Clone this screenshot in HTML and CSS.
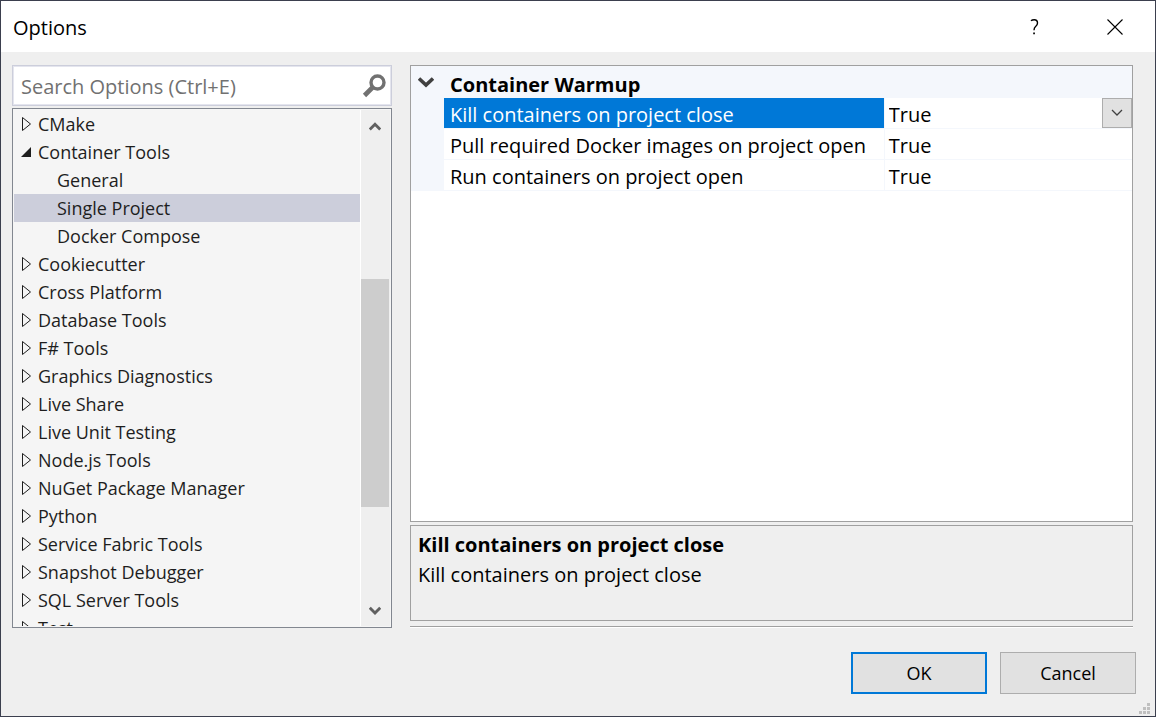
FILE: index.html
```
<!DOCTYPE html>
<html lang="en">
<head>
<meta charset="utf-8">
<title>Options</title>
<link rel="stylesheet" href="styles.css">
</head>
<body>
<svg class="defs" aria-hidden="true">
  <symbol id="closed" viewBox="0 0 11 16"><path d="M1.500 1.500v13L9.500 8z" fill="none" stroke="#1e1e1e"/></symbol>
  <symbol id="open" viewBox="0 0 11 16"><path d="M10 3v10H0z" fill="#1e1e1e"/></symbol>
</svg>
<div class="dialog" role="dialog" aria-labelledby="title">
  <header class="titlebar">
    <h1 class="title" id="title">Options</h1>
    <button class="caption" type="button" aria-label="Help">
      <svg width="16" height="16" viewBox="0 0 16 16"><path d="M4 1.800Q5.200 .700 7.300 .700Q10.500 .700 10.500 4Q10.500 5.800 8.800 7.300Q7 8.800 7 11.200" fill="none" stroke="#000" stroke-width="1.400"/><path d="M6.200 13.500h1.700v1.700H6.200z"/></svg>
    </button>
    <button class="caption" type="button" aria-label="Close">
      <svg width="16" height="16" viewBox="0 0 16 16"><path d="M.5.5l15 15M15.500.5l-15 15" fill="none" stroke="#000" stroke-width="1.100"/></svg>
    </button>
  </header>
  <main class="content">
    <section class="nav">
      <div class="search">
        <input class="search-input" type="text" aria-label="Search Options" placeholder="Search Options (Ctrl+E)">
        <button class="search-button" type="button" aria-label="Search">
          <svg width="24" height="24" viewBox="0 0 24 24" fill="none" stroke="#717171"><circle cx="15.500" cy="8.500" r="6.500" stroke-width="3.400"/><path d="M11 13L2.500 21.500" stroke-width="4.600"/></svg>
        </button>
      </div>
      <div class="tree">
        <ul class="items">
          <li><button class="item" type="button"><svg class="arrow"><use href="#closed"/></svg>CMake</button></li>
          <li><button class="item" type="button" aria-expanded="true"><svg class="arrow"><use href="#open"/></svg>Container Tools</button>
            <ul class="children">
              <li><button class="item child" type="button">General</button></li>
              <li><button class="item child selected" type="button" aria-current="true">Single Project</button></li>
              <li><button class="item child" type="button">Docker Compose</button></li>
            </ul>
          </li>
          <li><button class="item" type="button"><svg class="arrow"><use href="#closed"/></svg>Cookiecutter</button></li>
          <li><button class="item" type="button"><svg class="arrow"><use href="#closed"/></svg>Cross Platform</button></li>
          <li><button class="item" type="button"><svg class="arrow"><use href="#closed"/></svg>Database Tools</button></li>
          <li><button class="item" type="button"><svg class="arrow"><use href="#closed"/></svg>F# Tools</button></li>
          <li><button class="item" type="button"><svg class="arrow"><use href="#closed"/></svg>Graphics Diagnostics</button></li>
          <li><button class="item" type="button"><svg class="arrow"><use href="#closed"/></svg>Live Share</button></li>
          <li><button class="item" type="button"><svg class="arrow"><use href="#closed"/></svg>Live Unit Testing</button></li>
          <li><button class="item" type="button"><svg class="arrow"><use href="#closed"/></svg>Node.js Tools</button></li>
          <li><button class="item" type="button"><svg class="arrow"><use href="#closed"/></svg>NuGet Package Manager</button></li>
          <li><button class="item" type="button"><svg class="arrow"><use href="#closed"/></svg>Python</button></li>
          <li><button class="item" type="button"><svg class="arrow"><use href="#closed"/></svg>Service Fabric Tools</button></li>
          <li><button class="item" type="button"><svg class="arrow"><use href="#closed"/></svg>Snapshot Debugger</button></li>
          <li><button class="item" type="button"><svg class="arrow"><use href="#closed"/></svg>SQL Server Tools</button></li>
          <li><button class="item" type="button"><svg class="arrow"><use href="#closed"/></svg>Test</button></li>
        </ul>
        <div class="scrollbar">
          <button class="scroll-button" type="button" aria-label="Scroll up"><svg width="12" height="10" viewBox="0 0 12 10"><path d="M.8 8.500L6 3.300l5.200 5.200" fill="none" stroke="#606060" stroke-width="2.800"/></svg></button>
          <div class="track"><div class="before"></div><div class="thumb"></div><div class="after"></div></div>
          <button class="scroll-button" type="button" aria-label="Scroll down"><svg width="12" height="10" viewBox="0 0 12 10"><path d="M.8 2.700L6 7.900l5.200-5.200" fill="none" stroke="#606060" stroke-width="2.800"/></svg></button>
        </div>
      </div>
    </section>
    <section class="settings">
      <div class="grid">
        <table class="properties">
          <colgroup><col class="gutter"><col class="name"><col></colgroup>
          <thead>
            <tr class="category">
              <td><button class="collapse" type="button" aria-label="Collapse Container Warmup"><svg width="16" height="11" viewBox="0 0 16 11"><path d="M1 1.500l7 6.500 7-6.500" fill="none" stroke="#404040" stroke-width="3.600"/></svg></button></td>
              <th colspan="2" scope="colgroup">Container Warmup</th>
            </tr>
          </thead>
          <tbody>
            <tr><td class="margin"></td><th class="active" scope="row"><label for="kill">Kill containers on project close</label></th>
              <td class="value"><div class="picker"><select id="kill"><option>True</option><option>False</option></select><span class="drop"><svg width="12" height="8" viewBox="0 0 12 8"><path d="M1 1l5 5 5-5" fill="none" stroke="#404040" stroke-width="1.300"/></svg></span></div></td></tr>
            <tr><td class="margin"></td><th scope="row">Pull required Docker images on project open</th><td class="value">True</td></tr>
            <tr><td class="margin"></td><th scope="row">Run containers on project open</th><td class="value">True</td></tr>
          </tbody>
        </table>
      </div>
      <div class="description">
        <h2>Kill containers on project close</h2>
        <p>Kill containers on project close</p>
      </div>
      <hr class="rule">
    </section>
  </main>
  <footer class="actions">
    <button class="action default" type="button">OK</button>
    <button class="action" type="button">Cancel</button>
    <svg class="grip" width="11" height="11" viewBox="0 0 11 11" fill="#bfbfbf"><path d="M8 0h3v3H8zM4 4h3v3H4zM8 4h3v3H8zM0 8h3v3H0zM4 8h3v3H4zM8 8h3v3H8z"/></svg>
  </footer>
</div>
</body>
</html>
```
FILE: styles.css
```
* { box-sizing: border-box; }
body { margin: 0; font-family: "Open Sans", "Noto Sans", sans-serif; font-size: 20px; color: #000; }
button, input, select { font: inherit; color: inherit; margin: 0; padding: 0; border: 0; border-radius: 0; background: transparent; }
svg { display: block; flex: none; }
ul { margin: 0; padding: 0; list-style: none; }
.defs { display: none; }
.dialog { display: flex; flex-direction: column; height: 100vh; min-height: 480px; border: 1px solid #3b3f4e; background: #efefef; }

.titlebar { display: flex; flex: none; height: 51px; padding-left: 12px; background: #fff; }
.title { flex: 1; margin: 0; font-size: 20px; font-weight: 400; line-height: 53px; }
.caption { display: flex; align-items: center; justify-content: center; width: 80px; }

.content { display: flex; flex: 1; gap: 18px; min-height: 0; padding: 13px 22px 0 11px; }
.nav { display: flex; flex-direction: column; gap: 2px; width: 380px; flex: none; }
.search { display: flex; align-items: center; height: 41px; padding: 0 3px 0 8px; border: 1px solid #cccedb; outline: 1px solid #e4e5ee; outline-offset: -2px; background: #fff; }
.search-input { flex: 1; min-width: 0; height: 37px; padding-top: 1px; }
.search-input::placeholder { color: #717171; opacity: 1; }
.search-button { width: 26px; }

.tree { display: flex; flex: 1; min-height: 0; padding: 1px; border: 1px solid #828790; background: #f5f5f5; }
.items { flex: 1; overflow: hidden; border-right: 1px solid #fff; }
.item { display: flex; align-items: center; gap: 6px; width: 100%; height: 28px; padding-left: 7px; font-size: 18px; color: #1e1e1e; text-align: left; white-space: nowrap; }
.child { padding-left: 43px; }
.selected { background: #cccedb; }
.arrow { width: 11px; height: 16px; }
.scrollbar { display: flex; flex-direction: column; width: 29px; background: #efefef; }
.scroll-button { display: flex; align-items: center; justify-content: center; height: 32px; padding-right: 1px; flex: none; }
.track { display: flex; flex: 1; flex-direction: column; padding-right: 1px; }
.before { flex: 137; }
.thumb { flex: 228; background: #cdcdcd; }
.after { flex: 87; }

.settings { display: flex; flex: 1; flex-direction: column; min-width: 0; }
.grid { flex: 1; min-height: 0; border: 1px solid #a0a0a0; background: #fff; }
.properties { width: 100%; table-layout: fixed; border-collapse: separate; border-spacing: 0; }
.gutter { width: 33px; }
.name { width: 61%; }
.properties td, .properties th { height: 31px; padding: 4px 0 0 6px; line-height: 26px; font-weight: 400; text-align: left; white-space: nowrap; border-bottom: 1px solid #f4f7fc; }
.properties .category td, .properties .category th { height: 32px; padding-top: 6px; background: #f4f7fc; border: 0; }
.properties .category th { font-weight: 700; }
.properties .category td { vertical-align: top; padding: 11px 0 0 7px; }
.properties .margin { background: #f4f7fc; }
.properties .active { background: #0078d7; color: #fff; }
.properties .value { padding-left: 4px; border-left: 1px solid #f4f7fc; }
.collapse { display: block; }
.picker { display: flex; position: relative; height: 26px; }
.picker select { flex: 1; appearance: none; line-height: 26px; }
.drop { position: absolute; top: -4px; right: 0; display: flex; align-items: center; justify-content: center; width: 30px; height: 30px; border: 1px solid #adadad; background: #e1e1e1; pointer-events: none; }
.description { height: 96px; margin-top: 3px; padding: 4px 7px; border: 1px solid #a0a0a0; line-height: 30px; }
.description h2, .description p { margin: 0; font-size: 20px; }
.rule { width: 100%; height: 2px; margin: 5px 0 0; border: 0; border-top: 1px solid #a0a0a0; border-bottom: 1px solid #fff; }

.actions { display: flex; position: relative; flex: none; justify-content: flex-end; gap: 13px; padding: 24px 19px 22px; }
.action { width: 136px; height: 42px; border: 1px solid #adadad; background: #e1e1e1; font-size: 18px; }
.default { border: 2px solid #0078d7; }
.grip { position: absolute; right: 5px; bottom: 2px; }
```
